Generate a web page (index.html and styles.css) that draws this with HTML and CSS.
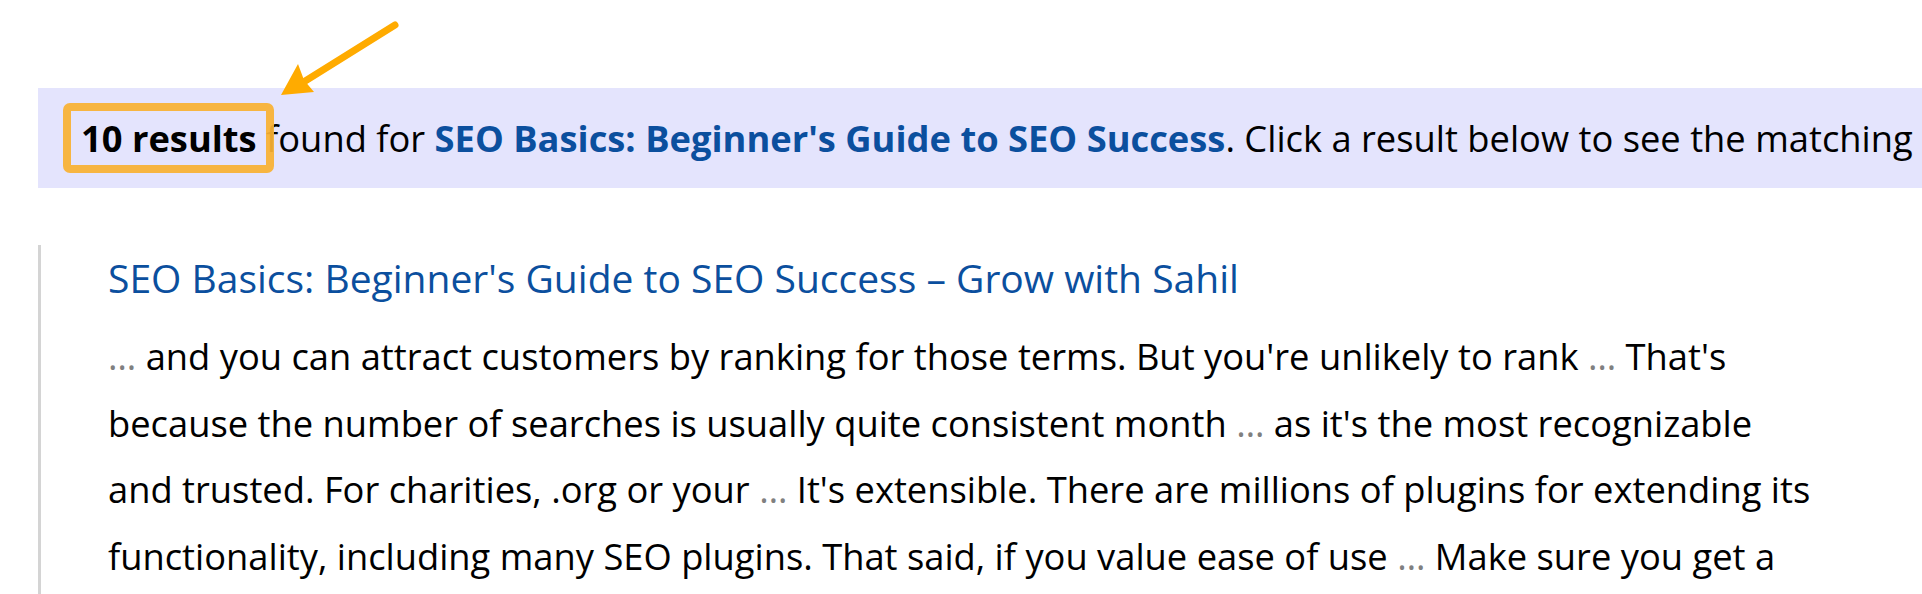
FILE: index.html
```html
<!DOCTYPE html>
<html lang="en">
<head>
<meta charset="utf-8">
<title>Search results</title>
<link rel="stylesheet" href="styles.css">
</head>
<body>
<div class="page">
  <svg class="arrow" width="140" height="100" viewBox="0 0 140 100" aria-hidden="true">
    <line x1="135" y1="25" x2="42" y2="83" stroke="#ffab00" stroke-width="7" stroke-linecap="round"/>
    <polygon points="21,95 38,64 44,80 54,92" fill="#ffab00"/>
  </svg>
  <div class="banner">
    <p class="banner-text"><strong class="count">10 results</strong> found for <strong class="query">SEO Basics: Beginner's Guide to SEO Success</strong>. Click a result below to see the matching</p>
  </div>
  <div class="results">
    <div class="result">
      <a class="result-title" href="#">SEO Basics: Beginner's Guide to SEO Success – Grow with Sahil</a>
      <p class="snippet"><span class="ell">…</span> and you can attract customers by ranking for those terms. But you're unlikely to rank <span class="ell">…</span> That's<br>because the number of searches is usually quite consistent month <span class="ell">…</span> as it's the most recognizable<br>and trusted. For charities, .org or your <span class="ell">…</span> It's extensible. There are millions of plugins for extending its<br>functionality, including many SEO plugins. That said, if you value ease of use <span class="ell">…</span> Make sure you get a</p>
    </div>
  </div>
</div>
</body>
</html>
```

FILE: styles.css
```css
html, body {
  margin: 0;
  padding: 0;
  background: #ffffff;
  overflow: hidden;
}

.page {
  position: relative;
  height: 594px;
  padding: 88px 0 0 38px;
  box-sizing: border-box;
  font-family: "Open Sans", "Liberation Sans", sans-serif;
  color: #000;
  overflow: hidden;
}

.arrow {
  position: absolute;
  left: 260px;
  top: 0;
  z-index: 2;
}

.banner {
  background: #e4e4fd;
  height: 100px;
  display: flex;
  align-items: center;
  padding-left: 43px;
  white-space: nowrap;
  overflow: hidden;
}

.banner-text {
  margin: 0;
  font-size: 36.3px;
}

.count {
  position: relative;
  font-weight: 700;
}

.count::after {
  content: "";
  position: absolute;
  left: -18px;
  right: -17px;
  top: -10px;
  bottom: -10px;
  border: 8px solid #f9b233;
  border-radius: 7px;
  opacity: 0.93;
}

.query {
  color: #0b4f9e;
  font-weight: 700;
}

.results {
  margin-top: 57px;
  border-left: 3px solid #d4d4d4;
  padding: 3px 0 0 67px;
  height: 349px;
  box-sizing: border-box;
}

.result-title {
  display: block;
  color: #0b4f9e;
  text-decoration: none;
  font-size: 39px;
  line-height: 60px;
}

.snippet {
  margin: 15px 0 0;
  font-size: 36.3px;
  line-height: 66.5px;
  white-space: nowrap;
}

.ell {
  color: #808080;
}
```
